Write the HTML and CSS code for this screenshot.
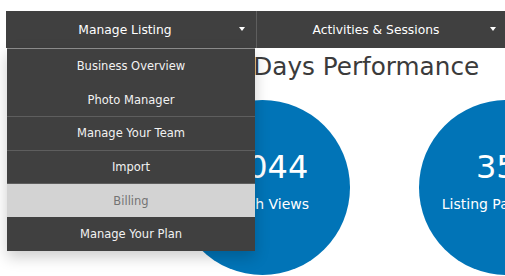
FILE: index.html
```html
<!DOCTYPE html>
<html>
<head>
<meta charset="utf-8">
<link rel="stylesheet" href="styles.css">
</head>
<body>
<div class="page">
  <nav class="navbar">
    <div class="tab tab-open">
      <span class="tab-label">Manage Listing</span>
      <span class="caret"></span>
      <ul class="dropdown">
        <li class="item">Business Overview</li>
        <li class="item">Photo Manager</li>
        <li class="item sep">Manage Your Team</li>
        <li class="item sep">Import</li>
        <li class="item active">Billing</li>
        <li class="item">Manage Your Plan</li>
      </ul>
    </div>
    <div class="tab">
      <span class="tab-label">Activities &amp; Sessions</span>
      <span class="caret"></span>
    </div>
  </nav>
  <main class="content">
    <h1 class="title">30 Days Performance</h1>
    <div class="stats">
      <div class="circle">
        <div class="num">2,044</div>
        <div class="label">Search Views</div>
      </div>
      <div class="circle">
        <div class="num">352</div>
        <div class="label">Listing Page Views</div>
      </div>
    </div>
  </main>
</div>
</body>
</html>
```
FILE: styles.css
```css
html, body {
  margin: 0;
  padding: 0;
  background: #fff;
  overflow: hidden;
}
body {
  font-family: "DejaVu Sans", "Open Sans", sans-serif;
  width: 505px;
  height: 276px;
}
.page {
  padding: 11px 0 0 6px;
  width: 600px;
}
.navbar {
  display: flex;
  height: 37px;
  position: relative;
  z-index: 5;
}
.tab {
  position: relative;
  box-sizing: border-box;
  width: 250px;
  padding-right: 12px;
  background: #404040;
  display: flex;
  align-items: center;
  justify-content: center;
  color: #fff;
  font-size: 12.3px;
}
.tab + .tab {
  width: 251px;
  border-left: 1px solid #5e5e5e;
}
.caret {
  position: absolute;
  right: 11px;
  top: 16px;
  width: 0;
  height: 0;
  border-left: 3.5px solid transparent;
  border-right: 3.5px solid transparent;
  border-top: 4px solid #fff;
}
.dropdown {
  position: absolute;
  left: 1px;
  top: 37px;
  width: 248px;
  margin: 0;
  padding: 0;
  list-style: none;
  background: #404040;
  border-top: 1px solid #8a8a8a;
  box-shadow: 0 6px 14px rgba(0, 0, 0, 0.2);
}
.item {
  height: 32.6px;
  border-top: 1px solid #404040;
  display: flex;
  align-items: center;
  justify-content: center;
  font-size: 11.5px;
  color: #f2f2f2;
}
.item:first-child {
  border-top: 0;
  height: 33.6px;
}
.item.sep {
  border-top-color: #5e5e5e;
}
.item.active {
  background: #d3d3d3;
  color: #747474;
  border-top-color: #5e5e5e;
}
.content {
  position: relative;
  z-index: 1;
}
.title {
  margin: 3px 0 0 208px;
  font-size: 24.7px;
  font-weight: 400;
  color: #3b3b3b;
  line-height: 32px;
  white-space: nowrap;
}
.stats {
  display: flex;
  gap: 69px;
  margin: 17px 0 0 169px;
}
.circle {
  flex: none;
  width: 175px;
  height: 175px;
  border-radius: 50%;
  background: #0174b7;
  color: #fff;
  display: flex;
  flex-direction: column;
  align-items: center;
  justify-content: center;
}
.num {
  font-size: 32px;
  line-height: 38px;
  margin-top: -16px;
}
.label {
  font-size: 14px;
  margin-top: 10px;
  white-space: nowrap;
}
```
